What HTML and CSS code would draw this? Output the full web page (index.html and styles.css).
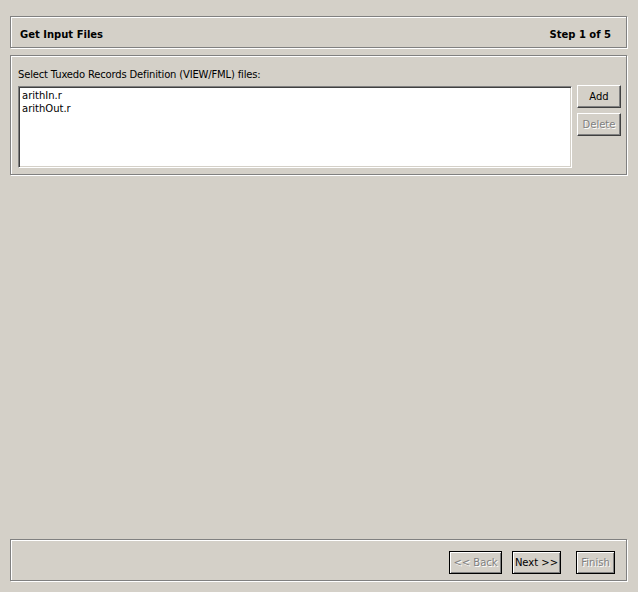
FILE: index.html
```html
<!DOCTYPE html>
<html>
<head>
<meta charset="utf-8">
<link rel="stylesheet" href="styles.css">
</head>
<body>
<div class="wizard">
  <div class="panel header">
    <span class="title">Get Input Files</span>
    <span class="title">Step 1 of 5</span>
  </div>
  <div class="panel files">
    <div class="label">Select Tuxedo Records Definition (VIEW/FML) files:</div>
    <div class="files-row">
      <div class="listbox">
        <div class="item">arithIn.r</div>
        <div class="item">arithOut.r</div>
      </div>
      <div class="side-buttons">
        <div class="btn raised add">Add</div>
        <div class="btn raised disabled">Delete</div>
      </div>
    </div>
  </div>
  <div class="panel footer">
    <div class="btn framed disabled back">&lt;&lt; Back</div>
    <div class="btn framed next">Next &gt;&gt;</div>
    <div class="btn framed disabled finish">Finish</div>
  </div>
</div>
</body>
</html>
```
FILE: styles.css
```css
html, body {
  margin: 0;
  padding: 0;
  background: #d4d0c8;
}
body {
  font-family: "DejaVu Sans", Verdana, sans-serif;
  font-size: 10px;
  color: #000;
}
.wizard {
  height: 592px;
  box-sizing: border-box;
  padding: 16px 11px 11px 10px;
  display: flex;
  flex-direction: column;
}
.panel {
  border: 1px solid #808080;
  box-shadow: inset 1px 1px 0 #fff, 1px 1px 0 #fff;
  box-sizing: border-box;
}
.header {
  height: 32px;
  display: flex;
  justify-content: space-between;
  align-items: center;
  padding: 5px 15px 0 9px;
}
.title {
  font-weight: bold;
  font-size: 10px;
}
.files {
  margin-top: 7px;
  height: 120px;
  padding: 12px 5px 0 7px;
}
.label {
  line-height: 13px;
  height: 17px;
  letter-spacing: -0.17px;
}
.files-row {
  display: flex;
  gap: 5px;
  align-items: flex-start;
}
.listbox {
  flex: 1;
  height: 82px;
  margin-top: 1px;
  background: #fff;
  box-sizing: border-box;
  border-style: solid;
  border-width: 1px;
  border-color: #808080 #fff #fff #808080;
  box-shadow: inset 1px 1px 0 #404040, inset -1px -1px 0 #d4d0c8;
  padding: 2px 3px;
}
.item {
  line-height: 13px;
  height: 13px;
}
.side-buttons {
  display: flex;
  flex-direction: column;
  gap: 5px;
}
.btn {
  box-sizing: border-box;
  height: 23px;
  display: flex;
  align-items: center;
  justify-content: center;
  background: #d4d0c8;
  border: 1px solid;
}
.raised {
  width: 44px;
  border-color: #fff #404040 #404040 #fff;
  box-shadow: inset -1px -1px 0 #808080;
}
.framed {
  border-color: #000;
  box-shadow: inset 1px 1px 0 #fff, inset -1px -1px 0 #808080;
}
.disabled {
  color: #808080;
  text-shadow: 1px 1px 0 #fff;
}
.footer {
  margin-top: auto;
  height: 42px;
  display: flex;
  justify-content: flex-end;
  align-items: flex-start;
  padding: 11px 11px 0 0;
}
.back { width: 53px; }
.next { width: 49px; margin-left: 10px; }
.finish { width: 39px; margin-left: 15px; }
```
